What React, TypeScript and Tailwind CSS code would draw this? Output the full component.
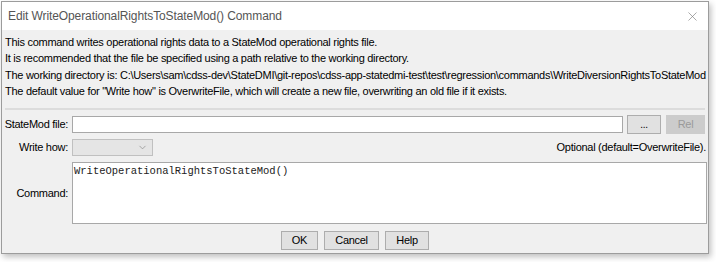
import { X, ChevronDown } from 'lucide-react';

const ui = "font-['Liberation_Sans',Arial,sans-serif]";

export default function App() {
    return (
        <div className={`w-[716px] h-[262px] bg-white ${ui} text-[11px] text-black`}>
            <div className="ml-px mt-px w-[708px] h-[253px] border border-[#9c9c9c] bg-[#f0f0f0] shadow-[2px_3px_6px_rgba(0,0,0,0.25)] flex flex-col">
                {/* Title bar */}
                <div className="h-[28px] bg-white flex items-center justify-between pl-[6px] pr-[8px] shrink-0">
                    <span className="text-[12px] text-[#555] tracking-[-0.1px]">Edit WriteOperationalRightsToStateMod() Command</span>
                    <X className="w-[15px] h-[15px] text-[#777]" strokeWidth={1} />
                </div>

                {/* Description */}
                <div className="px-[3px] pt-[4px] leading-[16.3px] tracking-[-0.28px] whitespace-nowrap">
                    <div>This command writes operational rights data to a StateMod operational rights file.</div>
                    <div>It is recommended that the file be specified using a path relative to the working directory.</div>
                    <div>The working directory is: C:\Users\sam\cdss-dev\StateDMI\git-repos\cdss-app-statedmi-test\test\regression\commands\WriteDiversionRightsToStateMod</div>
                    <div>The default value for "Write how" is OverwriteFile, which will create a new file, overwriting an old file if it exists.</div>
                </div>

                <div className="mx-[3px] mt-[9px] border-t-2 border-[#dcdcdc]" />

                {/* Form */}
                <div className="pl-[2px] pr-[1px] pt-[6px] flex flex-col gap-[6px] tracking-[-0.28px]">
                    <div className="flex items-center h-[17px]">
                        <span className="w-[64px] text-right">StateMod file:</span>
                        <div className="ml-[4px] w-[551px] h-[17px] bg-white border border-[#a8a8a8]" />
                        <button className="ml-[4px] w-[34px] h-[19px] border border-[#adadad] bg-[#e1e1e1] text-[10px] leading-none">...</button>
                        <button className="ml-[5px] w-[39px] h-[19px] bg-[#cccccc] text-[#9a9a9a]">Rel</button>
                    </div>
                    <div className="flex items-center h-[17px]">
                        <span className="w-[64px] text-right">Write how:</span>
                        <div className="ml-[4px] w-[81px] h-[17px] bg-[#e5e5e5] border border-[#c0c0c0] flex items-center justify-end pr-[4px]">
                            <ChevronDown className="w-[11px] h-[11px] text-[#888]" strokeWidth={1.5} />
                        </div>
                        <span className="ml-auto mr-[1px]">Optional (default=OverwriteFile).</span>
                    </div>
                    <div className="flex items-center">
                        <span className="w-[64px] text-right">Command:</span>
                        <div className="ml-[4px] w-[635px] h-[62px] bg-white border border-[#a8a8a8] px-[1px] py-[1px] font-['Liberation_Mono','Courier_New',monospace] text-[10.5px] tracking-normal leading-[15px] text-[#222]">
                            WriteOperationalRightsToStateMod()
                        </div>
                    </div>
                </div>

                {/* Buttons */}
                <div className="mt-[7px] flex justify-center gap-[6px] tracking-[-0.28px]">
                    <button className="w-[37px] h-[19px] border border-[#adadad] bg-[#e1e1e1]">OK</button>
                    <button className="w-[55px] h-[19px] border border-[#adadad] bg-[#e1e1e1]">Cancel</button>
                    <button className="w-[44px] h-[19px] border border-[#adadad] bg-[#e1e1e1]">Help</button>
                </div>
            </div>
        </div>
    );
}
